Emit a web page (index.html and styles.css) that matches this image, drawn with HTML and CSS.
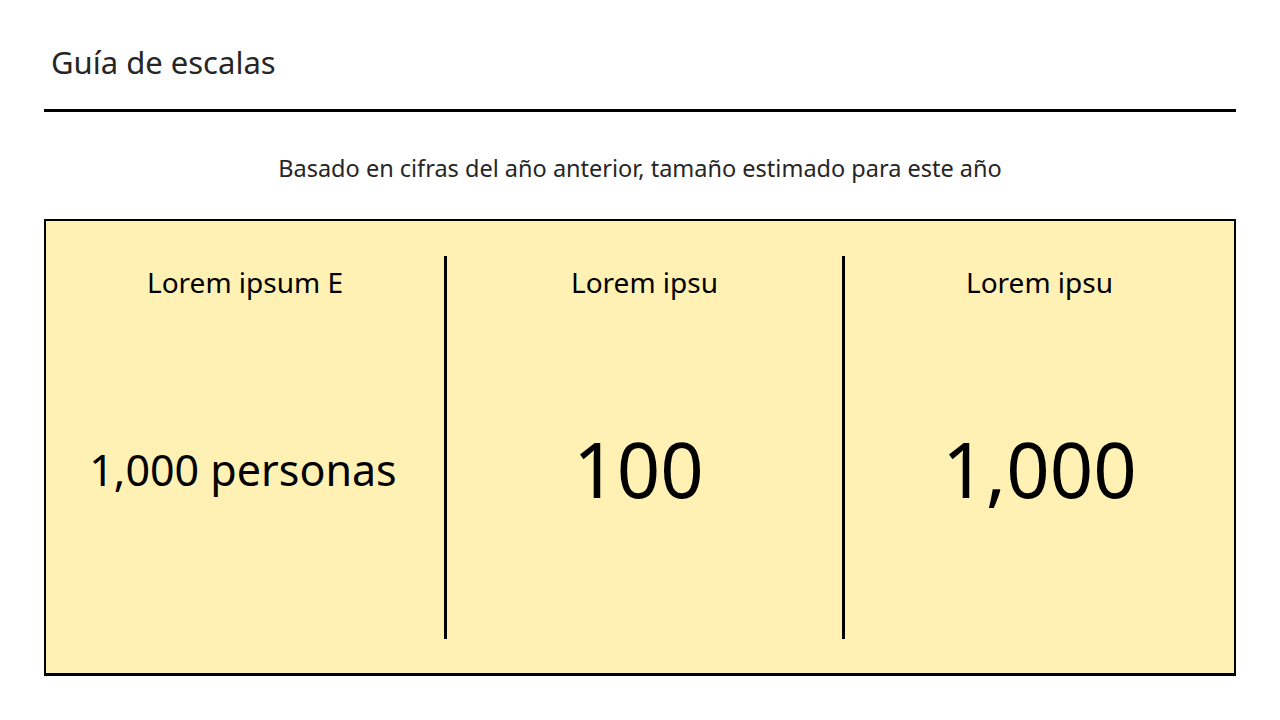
FILE: index.html
```html
<!DOCTYPE html>
<html lang="es">
<head>
<meta charset="utf-8">
<title>Guía de escalas</title>
<link rel="stylesheet" href="styles.css">
</head>
<body>
<main class="page">
  <header class="header">
    <h1 class="title">Guía de escalas</h1>
  </header>
  <p class="subtitle">Basado en cifras del año anterior, tamaño estimado para este año</p>
  <section class="scale">
    <div class="col">
      <div class="label">Lorem ipsum E</div>
      <div class="value value-text">1,000 personas</div>
    </div>
    <div class="divider"></div>
    <div class="col">
      <div class="label">Lorem ipsu</div>
      <div class="value value-big value-shift">100</div>
    </div>
    <div class="divider"></div>
    <div class="col">
      <div class="label">Lorem ipsu</div>
      <div class="value value-big">1,000</div>
    </div>
  </section>
</main>
</body>
</html>
```

FILE: styles.css
```css
* { box-sizing: border-box; }
html, body {
  margin: 0;
  padding: 0;
  background: #ffffff;
}
body {
  font-family: "Noto Sans", "Open Sans", sans-serif;
  color: #000;
  width: 1280px;
  height: 720px;
  overflow: hidden;
}
.page {
  padding: 44px 44px 0 44px;
}
.header {
  border-bottom: 3px solid #000;
  padding: 0 0 29px 7px;
}
.title {
  margin: 0;
  font-size: 31px;
  line-height: 36px;
  font-weight: 400;
  color: #262626;
}
.subtitle {
  margin: 42px 0 0 0;
  text-align: center;
  font-size: 23.5px;
  line-height: 28px;
  color: #262626;
}
.scale {
  margin-top: 37px;
  height: 457px;
  border: 2px solid #000;
  border-bottom-width: 3px;
  background: #fff1b3;
  padding: 35px 0 34px 0;
  display: grid;
  grid-template-columns: 398px 3px 395px 3px 1fr;
}
.divider {
  background: #000;
}
.col {
  display: flex;
  flex-direction: column;
  align-items: center;
  padding-top: 9px;
}
.label {
  font-size: 28px;
  line-height: 34px;
  color: #000;
}
.value {
  flex: 1;
  display: flex;
  align-items: center;
  justify-content: center;
  line-height: 1;
  color: #000;
}
.value-text {
  font-size: 43px;
  padding-right: 4px;
}
.value-big {
  font-size: 76px;
}
.value-shift {
  padding-right: 12px;
}
```
